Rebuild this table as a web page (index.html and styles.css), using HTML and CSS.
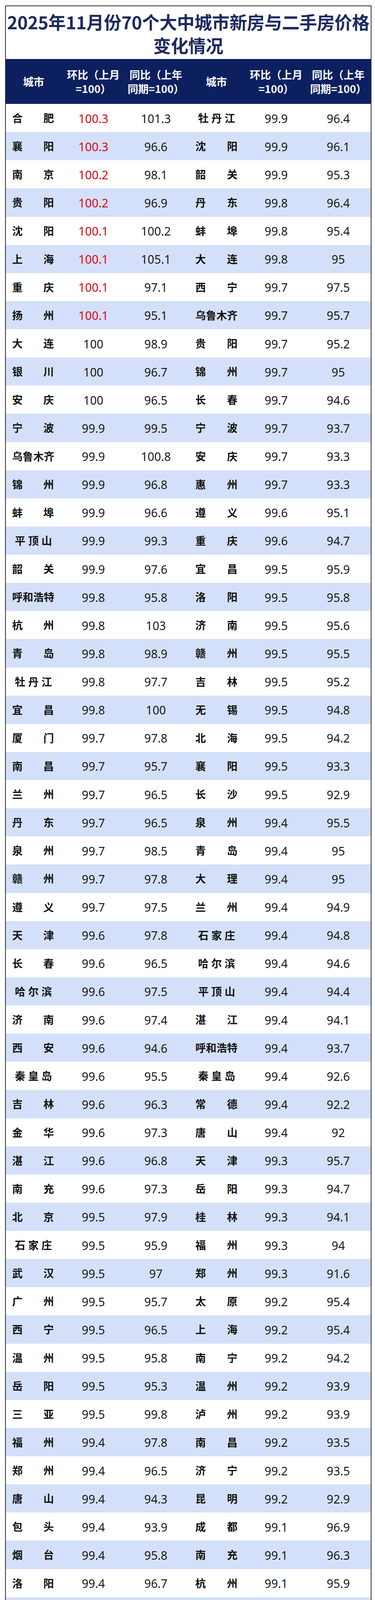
FILE: index.html
```html
<!DOCTYPE html>
<html lang="zh-CN">
<head>
<meta charset="utf-8">
<title>2025年11月份70个大中城市新房与二手房价格变化情况</title>
<link rel="stylesheet" href="styles.css">
</head>
<body>
<div class="frame">
  <h1 class="title"><span class="line1">2025年11月份70个大中城市新房与二手房价格</span><br>变化情况</h1>
  <div class="row head">
    <div>城市</div>
    <div>环比（上月<br>=100）</div>
    <div>同比（上年<br>同期=100）</div>
    <div>城市</div>
    <div>环比（上月<br>=100）</div>
    <div>同比（上年<br>同期=100）</div>
  </div>
  <div class="rows">
    <div class="row"><div class="city">合肥</div><div class="num up">100.3</div><div class="num">101.3</div><div class="city c3">牡丹江</div><div class="num">99.9</div><div class="num">96.4</div></div>
    <div class="row"><div class="city">襄阳</div><div class="num up">100.3</div><div class="num">96.6</div><div class="city">沈阳</div><div class="num">99.9</div><div class="num">96.1</div></div>
    <div class="row"><div class="city">南京</div><div class="num up">100.2</div><div class="num">98.1</div><div class="city">韶关</div><div class="num">99.9</div><div class="num">95.3</div></div>
    <div class="row"><div class="city">贵阳</div><div class="num up">100.2</div><div class="num">96.9</div><div class="city">丹东</div><div class="num">99.8</div><div class="num">96.4</div></div>
    <div class="row"><div class="city">沈阳</div><div class="num up">100.1</div><div class="num">100.2</div><div class="city">蚌埠</div><div class="num">99.8</div><div class="num">95.4</div></div>
    <div class="row"><div class="city">上海</div><div class="num up">100.1</div><div class="num">105.1</div><div class="city">大连</div><div class="num">99.8</div><div class="num">95</div></div>
    <div class="row"><div class="city">重庆</div><div class="num up">100.1</div><div class="num">97.1</div><div class="city">西宁</div><div class="num">99.7</div><div class="num">97.5</div></div>
    <div class="row"><div class="city">扬州</div><div class="num up">100.1</div><div class="num">95.1</div><div class="city">乌鲁木齐</div><div class="num">99.7</div><div class="num">95.7</div></div>
    <div class="row"><div class="city">大连</div><div class="num">100</div><div class="num">98.9</div><div class="city">贵阳</div><div class="num">99.7</div><div class="num">95.2</div></div>
    <div class="row"><div class="city">银川</div><div class="num">100</div><div class="num">96.7</div><div class="city">锦州</div><div class="num">99.7</div><div class="num">95</div></div>
    <div class="row"><div class="city">安庆</div><div class="num">100</div><div class="num">96.5</div><div class="city">长春</div><div class="num">99.7</div><div class="num">94.6</div></div>
    <div class="row"><div class="city">宁波</div><div class="num">99.9</div><div class="num">99.5</div><div class="city">宁波</div><div class="num">99.7</div><div class="num">93.7</div></div>
    <div class="row"><div class="city">乌鲁木齐</div><div class="num">99.9</div><div class="num">100.8</div><div class="city">安庆</div><div class="num">99.7</div><div class="num">93.3</div></div>
    <div class="row"><div class="city">锦州</div><div class="num">99.9</div><div class="num">96.8</div><div class="city">惠州</div><div class="num">99.7</div><div class="num">93.3</div></div>
    <div class="row"><div class="city">蚌埠</div><div class="num">99.9</div><div class="num">96.6</div><div class="city">遵义</div><div class="num">99.6</div><div class="num">95.1</div></div>
    <div class="row"><div class="city c3">平顶山</div><div class="num">99.9</div><div class="num">99.3</div><div class="city">重庆</div><div class="num">99.6</div><div class="num">94.7</div></div>
    <div class="row"><div class="city">韶关</div><div class="num">99.9</div><div class="num">97.6</div><div class="city">宜昌</div><div class="num">99.5</div><div class="num">95.9</div></div>
    <div class="row"><div class="city">呼和浩特</div><div class="num">99.8</div><div class="num">95.8</div><div class="city">洛阳</div><div class="num">99.5</div><div class="num">95.8</div></div>
    <div class="row"><div class="city">杭州</div><div class="num">99.8</div><div class="num">103</div><div class="city">济南</div><div class="num">99.5</div><div class="num">95.6</div></div>
    <div class="row"><div class="city">青岛</div><div class="num">99.8</div><div class="num">98.9</div><div class="city">赣州</div><div class="num">99.5</div><div class="num">95.5</div></div>
    <div class="row"><div class="city c3">牡丹江</div><div class="num">99.8</div><div class="num">97.7</div><div class="city">吉林</div><div class="num">99.5</div><div class="num">95.2</div></div>
    <div class="row"><div class="city">宜昌</div><div class="num">99.8</div><div class="num">100</div><div class="city">无锡</div><div class="num">99.5</div><div class="num">94.8</div></div>
    <div class="row"><div class="city">厦门</div><div class="num">99.7</div><div class="num">97.8</div><div class="city">北海</div><div class="num">99.5</div><div class="num">94.2</div></div>
    <div class="row"><div class="city">南昌</div><div class="num">99.7</div><div class="num">95.7</div><div class="city">襄阳</div><div class="num">99.5</div><div class="num">93.3</div></div>
    <div class="row"><div class="city">兰州</div><div class="num">99.7</div><div class="num">96.5</div><div class="city">长沙</div><div class="num">99.5</div><div class="num">92.9</div></div>
    <div class="row"><div class="city">丹东</div><div class="num">99.7</div><div class="num">96.5</div><div class="city">泉州</div><div class="num">99.4</div><div class="num">95.5</div></div>
    <div class="row"><div class="city">泉州</div><div class="num">99.7</div><div class="num">98.5</div><div class="city">青岛</div><div class="num">99.4</div><div class="num">95</div></div>
    <div class="row"><div class="city">赣州</div><div class="num">99.7</div><div class="num">97.8</div><div class="city">大理</div><div class="num">99.4</div><div class="num">95</div></div>
    <div class="row"><div class="city">遵义</div><div class="num">99.7</div><div class="num">97.5</div><div class="city">兰州</div><div class="num">99.4</div><div class="num">94.9</div></div>
    <div class="row"><div class="city">天津</div><div class="num">99.6</div><div class="num">97.8</div><div class="city c3">石家庄</div><div class="num">99.4</div><div class="num">94.8</div></div>
    <div class="row"><div class="city">长春</div><div class="num">99.6</div><div class="num">96.5</div><div class="city c3">哈尔滨</div><div class="num">99.4</div><div class="num">94.6</div></div>
    <div class="row"><div class="city c3">哈尔滨</div><div class="num">99.6</div><div class="num">97.5</div><div class="city c3">平顶山</div><div class="num">99.4</div><div class="num">94.4</div></div>
    <div class="row"><div class="city">济南</div><div class="num">99.6</div><div class="num">97.4</div><div class="city">湛江</div><div class="num">99.4</div><div class="num">94.1</div></div>
    <div class="row"><div class="city">西安</div><div class="num">99.6</div><div class="num">94.6</div><div class="city">呼和浩特</div><div class="num">99.4</div><div class="num">93.7</div></div>
    <div class="row"><div class="city c3">秦皇岛</div><div class="num">99.6</div><div class="num">95.5</div><div class="city c3">秦皇岛</div><div class="num">99.4</div><div class="num">92.6</div></div>
    <div class="row"><div class="city">吉林</div><div class="num">99.6</div><div class="num">96.3</div><div class="city">常德</div><div class="num">99.4</div><div class="num">92.2</div></div>
    <div class="row"><div class="city">金华</div><div class="num">99.6</div><div class="num">97.3</div><div class="city">唐山</div><div class="num">99.4</div><div class="num">92</div></div>
    <div class="row"><div class="city">湛江</div><div class="num">99.6</div><div class="num">96.8</div><div class="city">天津</div><div class="num">99.3</div><div class="num">95.7</div></div>
    <div class="row"><div class="city">南充</div><div class="num">99.6</div><div class="num">97.3</div><div class="city">岳阳</div><div class="num">99.3</div><div class="num">94.7</div></div>
    <div class="row"><div class="city">北京</div><div class="num">99.5</div><div class="num">97.9</div><div class="city">桂林</div><div class="num">99.3</div><div class="num">94.1</div></div>
    <div class="row"><div class="city c3">石家庄</div><div class="num">99.5</div><div class="num">95.9</div><div class="city">福州</div><div class="num">99.3</div><div class="num">94</div></div>
    <div class="row"><div class="city">武汉</div><div class="num">99.5</div><div class="num">97</div><div class="city">郑州</div><div class="num">99.3</div><div class="num">91.6</div></div>
    <div class="row"><div class="city">广州</div><div class="num">99.5</div><div class="num">95.7</div><div class="city">太原</div><div class="num">99.2</div><div class="num">95.4</div></div>
    <div class="row"><div class="city">西宁</div><div class="num">99.5</div><div class="num">96.5</div><div class="city">上海</div><div class="num">99.2</div><div class="num">95.4</div></div>
    <div class="row"><div class="city">温州</div><div class="num">99.5</div><div class="num">95.8</div><div class="city">南宁</div><div class="num">99.2</div><div class="num">94.2</div></div>
    <div class="row"><div class="city">岳阳</div><div class="num">99.5</div><div class="num">95.3</div><div class="city">温州</div><div class="num">99.2</div><div class="num">93.9</div></div>
    <div class="row"><div class="city">三亚</div><div class="num">99.5</div><div class="num">99.8</div><div class="city">泸州</div><div class="num">99.2</div><div class="num">93.9</div></div>
    <div class="row"><div class="city">福州</div><div class="num">99.4</div><div class="num">97.8</div><div class="city">南昌</div><div class="num">99.2</div><div class="num">93.5</div></div>
    <div class="row"><div class="city">郑州</div><div class="num">99.4</div><div class="num">96.5</div><div class="city">济宁</div><div class="num">99.2</div><div class="num">93.5</div></div>
    <div class="row"><div class="city">唐山</div><div class="num">99.4</div><div class="num">94.3</div><div class="city">昆明</div><div class="num">99.2</div><div class="num">92.9</div></div>
    <div class="row"><div class="city">包头</div><div class="num">99.4</div><div class="num">93.9</div><div class="city">成都</div><div class="num">99.1</div><div class="num">96.9</div></div>
    <div class="row"><div class="city">烟台</div><div class="num">99.4</div><div class="num">95.8</div><div class="city">南充</div><div class="num">99.1</div><div class="num">96.3</div></div>
    <div class="row"><div class="city">洛阳</div><div class="num">99.4</div><div class="num">96.7</div><div class="city">杭州</div><div class="num">99.1</div><div class="num">95.9</div></div>
    <div class="row"><div class="city">大理</div><div class="num">99.4</div><div class="num">95.6</div><div class="city">金华</div><div class="num">99.1</div><div class="num">94.6</div></div>
    <div class="row"><div class="city">太原</div><div class="num">99.3</div><div class="num">99.3</div><div class="city">九江</div><div class="num">99.1</div><div class="num">94.2</div></div>
    <div class="row"><div class="city">南宁</div><div class="num">99.3</div><div class="num">99.9</div><div class="city">合肥</div><div class="num">99.1</div><div class="num">93</div></div>
    <div class="row"><div class="city">海口</div><div class="num">99.3</div><div class="num">95.2</div><div class="city">包头</div><div class="num">99.1</div><div class="num">92.6</div></div>
    <div class="row"><div class="city">成都</div><div class="num">99.3</div><div class="num">99.5</div><div class="city">烟台</div><div class="num">99.1</div><div class="num">92.5</div></div>
    <div class="row"><div class="city">九江</div><div class="num">99.3</div><div class="num">96.2</div><div class="city">海口</div><div class="num">99</div><div class="num">95.5</div></div>
    <div class="row"><div class="city">济宁</div><div class="num">99.3</div><div class="num">96.1</div><div class="city">深圳</div><div class="num">99</div><div class="num">95.2</div></div>
    <div class="row"><div class="city">泸州</div><div class="num">99.3</div><div class="num">94.8</div><div class="city">银川</div><div class="num">99</div><div class="num">94.1</div></div>
    <div class="row"><div class="city">长沙</div><div class="num">99.2</div><div class="num">98.4</div><div class="city">厦门</div><div class="num">99</div><div class="num">93.6</div></div>
    <div class="row"><div class="city">徐州</div><div class="num">99.2</div><div class="num">95</div><div class="city">南京</div><div class="num">99</div><div class="num">92.7</div></div>
    <div class="row"><div class="city">常德</div><div class="num">99.2</div><div class="num">96.6</div><div class="city">武汉</div><div class="num">99</div><div class="num">92.3</div></div>
    <div class="row"><div class="city">惠州</div><div class="num">99.2</div><div class="num">97</div><div class="city">徐州</div><div class="num">99</div><div class="num">91</div></div>
    <div class="row"><div class="city">桂林</div><div class="num">99.2</div><div class="num">96.1</div><div class="city">西安</div><div class="num">98.9</div><div class="num">91.8</div></div>
    <div class="row"><div class="city">深圳</div><div class="num">99.1</div><div class="num">96.3</div><div class="city">三亚</div><div class="num">98.8</div><div class="num">93.4</div></div>
    <div class="row"><div class="city">昆明</div><div class="num">99.1</div><div class="num">94.6</div><div class="city">广州</div><div class="num">98.8</div><div class="num">92.8</div></div>
    <div class="row"><div class="city">北海</div><div class="num">99.1</div><div class="num">94.2</div><div class="city">北京</div><div class="num">98.7</div><div class="num">93.2</div></div>
    <div class="row"><div class="city">无锡</div><div class="num">99</div><div class="num">96</div><div class="city">扬州</div><div class="num">98.6</div><div class="num">92</div></div>
  </div>
</div>
</body>
</html>
```
FILE: styles.css
```css
html, body {
  margin: 0;
  padding: 0;
  background: #ffffff;
}

body {
  font-family: "Noto Sans CJK SC", "Noto Sans", sans-serif;
  color: #111111;
}

.frame {
  width: 938px;
  margin: 14px 0 0 13px;
  box-sizing: border-box;
  border: 2px solid #2e2e2e;
  border-bottom: 4px solid #1a1a1a;
  background: #ffffff;
}

.title {
  margin: 0;
  padding: 10px 0 5px;
  text-align: center;
  font-family: "Noto Sans CJK SC", sans-serif;
  font-weight: 700;
  font-size: 45px;
  line-height: 60px;
  color: #1b2a5f;
  letter-spacing: -0.2px;
}

.title .line1 {
  white-space: nowrap;
}

.row {
  display: grid;
  grid-template-columns: 142px 164px 156px 154px 152px 166px;
  align-items: center;
  height: 72.13px;
}

.row.head {
  height: 115px;
  background: #0c2060;
  color: #ffffff;
  font-family: "Noto Sans CJK SC", sans-serif;
  font-weight: 700;
  font-size: 27px;
  line-height: 36px;
  text-align: center;
}

.row.head > div {
  white-space: nowrap;
}

.rows .row:nth-child(even) {
  background: #d4e0f9;
}

.city {
  font-family: "Noto Sans CJK SC", sans-serif;
  font-weight: 700;
  font-size: 27px;
  line-height: 36px;
  color: #111111;
  text-align: justify;
  text-align-last: justify;
  white-space: nowrap;
}

.row > .city:nth-child(1) {
  padding: 0 19px 0 16px;
}

.row > .city:nth-child(4) {
  padding: 0 23px;
}

.city.c3 {
  text-align: center;
  text-align-last: center;
  letter-spacing: 7px;
  text-indent: 7px;
}

.num {
  font-family: "Noto Sans", "Open Sans", sans-serif;
  font-weight: 400;
  font-size: 30px;
  line-height: 36px;
  text-align: center;
  color: #1a1a1a;
  padding-top: 3px;
}

.num.up {
  color: #e60012;
}
```
